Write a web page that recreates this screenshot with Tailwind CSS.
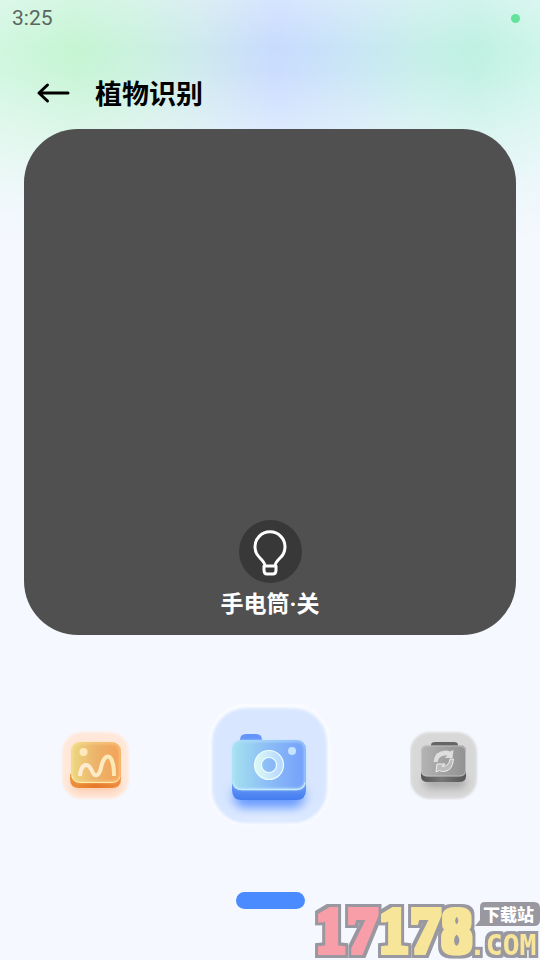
<!DOCTYPE html>
<html lang="zh-CN">
<head>
<meta charset="utf-8">
<meta name="viewport" content="width=device-width, initial-scale=1">
<title>植物识别</title>
<script src="https://cdn.jsdelivr.net/npm/@tailwindcss/browser@4"></script>
</head>
<body class="relative flex min-h-screen flex-col overflow-x-hidden bg-[#f5f8ff] font-['Roboto','Noto_Sans_CJK_SC',sans-serif]">
<div class="absolute inset-x-0 top-0 -z-10 h-60 bg-[linear-gradient(#f5f8ff50_0%,#f5f8ff00_20%,#f5f8ff10_30%,#f5f8ff80_56%,#f5f8ffd0_78%,#f5f8ff_100%),linear-gradient(90deg,#d0f7df_0%,#c5f5d3_14%,#caf2de_25%,#cee9ee_37%,#c8dbff_51%,#c9e6f5_66%,#c6efe9_78%,#bff1e2_88%,#cdf5e9_100%)]"></div>

<div class="flex h-9 items-center justify-between pr-5 pl-3">
  <time class="text-[21px] leading-8 text-[#5a665e]">3:25</time>
  <span class="size-[9px] rounded-full bg-[#62e29b]"></span>
</div>

<header class="flex h-[93px] items-center gap-[25px] px-9 pt-5">
  <button type="button" aria-label="返回" class="flex">
    <svg class="h-6 w-[34px]" viewBox="0 0 34 24" fill="none" stroke="#000" stroke-width="3" stroke-linecap="round" stroke-linejoin="round"><path d="M32 12H3M11.500 4 3 12l8.500 8"/></svg>
  </button>
  <h1 class="pt-1 text-[27px] leading-9 font-bold text-black">植物识别</h1>
</header>

<main class="flex flex-1 flex-col">
  <section class="mx-6 flex h-[506px] flex-col items-center justify-end rounded-[54px] bg-[#505050] pb-3">
    <button type="button" aria-labelledby="torch" class="flex size-[63px] items-center justify-center rounded-full bg-[#383838]">
      <svg class="size-[63px]" viewBox="0 0 63 63" fill="none" stroke="#fff" stroke-width="3" stroke-linejoin="round"><path d="M26 46c0-3-2-5-5-8a15 15 0 1 1 20 0c-3 3-5 5-5 8zM25 46h12v4q0 4-3 4h-6q-3 0-3-4z"/></svg>
    </button>
    <span id="torch" class="pt-1 text-[23px] leading-9 font-bold text-white">手电筒·关</span>
  </section>

  <nav class="mt-[68px] flex items-center justify-between px-[60px]" aria-label="拍摄">
    <button type="button" aria-label="相册">
      <svg class="size-[70px]" viewBox="0 0 70 70">
        <defs>
          <linearGradient id="og" x1="0" x2="1"><stop stop-color="#ecd982"/><stop offset=".5" stop-color="#edb36a"/><stop offset="1" stop-color="#f4a258"/></linearGradient>
          <linearGradient id="ob" x1="0" x2="1"><stop stop-color="#ed913c"/><stop offset=".5" stop-color="#e67a28"/><stop offset="1" stop-color="#ee8e40"/></linearGradient>
          <linearGradient id="ol" x1="0" x2="1"><stop stop-color="#ffecd9"/><stop offset="1" stop-color="#fbe9b4"/></linearGradient>
          <filter id="b1" x="-20%" y="-20%" width="140%" height="140%"><feGaussianBlur stdDeviation="1"/></filter>
          <filter id="b4" x="-40%" y="-100%" width="180%" height="300%"><feGaussianBlur stdDeviation="4"/></filter>
        </defs>
        <rect x="2" y="2" width="67" height="67" rx="20" fill="#ffece0" filter="url(#b1)"/>
        <rect x="4" y="4" width="63" height="63" rx="18" fill="#ffe7d9" filter="url(#b1)"/>
        <rect x="13" y="49" width="46" height="12" rx="6" fill="#fac7a5" filter="url(#b4)"/>
        <path d="M10 44h51v5q0 9-9 9H19q-9 0-9-9z" fill="url(#ob)"/>
        <rect x="11" y="12" width="50" height="41" rx="9" fill="url(#og)"/>
        <rect x="12" y="13" width="48" height="39" rx="8" fill="none" stroke="#ffe8a0" stroke-opacity=".5" stroke-width="2" filter="url(#b1)"/>
        <path d="M12 46q1 6.500 9 6.500h30q8 0 9-6" fill="none" stroke="#ffebaa"/>
        <circle cx="23.500" cy="22" r="4" fill="#ffe9bb"/>
        <path d="M20 46c1-13 8-14 12-5 3 7 7 5 9-3 3-16 13-17 13 8" fill="none" stroke="url(#ol)" stroke-width="4"/>
      </svg>
    </button>
    <button type="button" aria-label="拍照">
      <svg class="size-[124px]" viewBox="0 0 124 124">
        <defs>
          <linearGradient id="cg" x1="0" x2="1"><stop stop-color="#a5e1ef"/><stop offset=".5" stop-color="#8bbcf6"/><stop offset="1" stop-color="#749ffb"/></linearGradient>
          <linearGradient id="cb" x1="0" y1="0" x2="0" y2="1"><stop stop-color="#6da0f7"/><stop offset="1" stop-color="#447bf0"/></linearGradient>
          <linearGradient id="cr"><stop stop-color="#d9f6f5"/><stop offset="1" stop-color="#b8daff"/></linearGradient>
          <filter id="b2" x="-20%" y="-20%" width="140%" height="140%"><feGaussianBlur stdDeviation="1.500"/></filter>
          <filter id="b7" x="-40%" y="-120%" width="180%" height="340%"><feGaussianBlur stdDeviation="6"/></filter>
        </defs>
        <rect x="1" y="1" width="121" height="122" rx="38" fill="#fcfdff" filter="url(#b1)"/>
        <rect x="4" y="5" width="115" height="115" rx="34" fill="#d8e6ff" filter="url(#b2)"/>
        <path d="M16 105Q62 92 108 105Q90 118 62 118T16 105" fill="#edf4ff" opacity=".7" filter="url(#b7)"/>
        <rect x="26" y="84" width="70" height="21" rx="9" fill="#6598ff" filter="url(#b7)"/>
        <path d="M32 40v-3q0-6 6-6h10q6 0 6 6v3z" fill="#6595f9"/>
        <path d="M24 79h74v8q0 10-10 10H34q-10 0-10-10z" fill="url(#cb)"/>
        <rect x="24" y="37" width="74" height="50" rx="9" fill="url(#cg)"/>
        <rect x="25" y="38" width="72" height="48" rx="8" fill="none" stroke="#b8e4ff" stroke-opacity=".7" stroke-width="2" filter="url(#b1)"/>
        <path d="M25 79q1 7.500 9 7.500h54q8 0 9-7" fill="none" stroke="#c5eafa" stroke-width="1.500"/>
        <circle cx="61" cy="62" r="11" fill="none" stroke="url(#cr)" stroke-width="7"/>
        <circle cx="61" cy="62" r="14.500" fill="none" stroke="#effcff" stroke-width="1.200"/><circle cx="61" cy="62" r="7.500" fill="none" stroke="#effcff" stroke-width="1.200"/>
        <circle cx="84" cy="48" r="4" fill="#c4e4ff"/>
      </svg>
    </button>
    <button type="button" aria-label="切换">
      <svg class="size-[70px]" viewBox="0 0 70 70">
        <defs>
          <linearGradient id="gg" x1="0" x2="1"><stop stop-color="#b4b4b4"/><stop offset=".5" stop-color="#a2a2a2"/><stop offset="1" stop-color="#929292"/></linearGradient>
          <linearGradient id="gb" x1="0" x2="1"><stop stop-color="#555"/><stop offset=".45" stop-color="#777"/><stop offset="1" stop-color="#555"/></linearGradient>
        </defs>
        <rect x="0" y="2" width="67" height="67" rx="20" fill="#e2e3e5" filter="url(#b1)"/>
        <rect x="1" y="3" width="65" height="65" rx="19" fill="#d8d8d8" filter="url(#b1)"/>
        <rect x="14" y="47" width="42" height="11" rx="5" fill="#a5a5a5" filter="url(#b4)"/>
        <path d="M21 17v-2q0-3 4-3h19q4 0 4 3v2z" fill="#656565"/>
        <path d="M11 42h45v4q0 6-7 6H18q-7 0-7-6z" fill="url(#gb)"/>
        <rect x="11" y="15.500" width="45" height="31" rx="5" fill="url(#gg)"/>
        <path d="M11.500 40q0 6 7 6h30q7 0 7-6V22q0-6-7-6h-30q-7 0-7 6z" fill="none" stroke="#c8c8c8" stroke-opacity=".7"/>
        <path d="M23.500 32q1-11 12-11.500 3 0 4.500 1l3.500-1.500-1 8h-8l3-2.500q-9-1-10 6.500z" fill="#dedede"/>
        <path d="M43.500 29q-1 13-11 12.500l-3-1-3.500 1.500 1-8h8l-3 2.500q7 0 8-7.500z" fill="#bcbcbc" stroke="#eee"/>
      </svg>
    </button>
  </nav>

  <div class="mt-[65px] flex justify-center">
    <span class="h-[17px] w-[69px] rounded-full bg-[#4a8cff]"></span>
  </div>
</main>

<svg class="absolute right-0 bottom-0 h-[62px] w-[226px] overflow-visible" viewBox="0 0 226 62" role="img" aria-label="17178.COM 下载站">
  <defs>
    <filter id="block" filterUnits="userSpaceOnUse" x="0" y="-2" width="226" height="64">
      <feMorphology in="SourceGraphic" operator="dilate" radius="2 3" result="body"/>
      <feMorphology in="body" operator="dilate" radius="3 3" result="wide"/>
      <feFlood flood-color="#99979f"/><feComposite in2="wide" operator="in" result="edge"/>
      <feMerge><feMergeNode in="edge"/><feMergeNode in="body"/></feMerge>
    </filter>
    <filter id="rim" filterUnits="userSpaceOnUse" x="140" y="20" width="86" height="42">
      <feMorphology in="SourceAlpha" operator="dilate" radius="3" result="wide"/>
      <feFlood flood-color="#99979f"/><feComposite in2="wide" operator="in" result="edge"/>
      <feMerge><feMergeNode in="edge"/><feMergeNode in="SourceGraphic"/></feMerge>
    </filter>
  </defs>
  <text x="1" y="54" font-family="Liberation Serif, serif" font-weight="700" font-size="63" filter="url(#block)"><tspan fill="#f79ea9">17</tspan><tspan fill="#f7e69a">178</tspan></text>
  <text x="155" y="57" font-family="DejaVu Sans Mono, monospace" font-weight="700" font-size="28" fill="#f7e69a" filter="url(#rim)">.COM</text>
  <path d="M171 4h49q6 0 6 6v12q0 6-6 6h-59l5-6V9q0-5 5-5" fill="#99979f"/>
  <text x="169" y="23" font-family="Noto Sans CJK SC, sans-serif" font-weight="900" font-size="17" fill="#fff">下载站</text>
</svg>
</body>
</html>
